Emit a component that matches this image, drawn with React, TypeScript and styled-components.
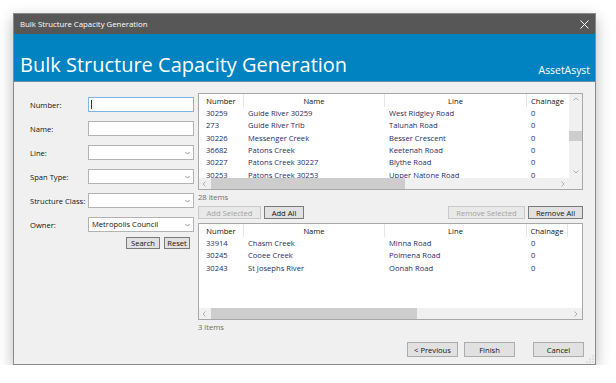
import styled, { createGlobalStyle } from "styled-components";

type Row = { number: string; name: string; line: string; chainage: string };

const available: Row[] = [
  { number: "30259", name: "Guide River 30259", line: "West Ridgley Road", chainage: "0" },
  { number: "273", name: "Guide River Trib", line: "Talunah Road", chainage: "0" },
  { number: "30226", name: "Messenger Creek", line: "Besser Crescent", chainage: "0" },
  { number: "36682", name: "Patons Creek", line: "Keetenah Road", chainage: "0" },
  { number: "30227", name: "Patons Creek 30227", line: "Blythe Road", chainage: "0" },
  { number: "30253", name: "Patons Creek 30253", line: "Upper Natone Road", chainage: "0" },
];

const selected: Row[] = [
  { number: "33914", name: "Chasm Creek", line: "Minna Road", chainage: "0" },
  { number: "30245", name: "Cooee Creek", line: "Poimena Road", chainage: "0" },
  { number: "30243", name: "St Josephs River", line: "Oonah Road", chainage: "0" },
];

const COLS = "45px 141px 142px 41px";

function Chevron({ dir }: { dir: "left" | "right" | "up" | "down" }) {
  const pts = {
    left: "3.5,0.5 1,3 3.5,5.5",
    right: "1.5,0.5 4,3 1.5,5.5",
    up: "0.5,3.5 3,1 5.5,3.5",
    down: "0.5,1.5 3,4 5.5,1.5",
  }[dir];
  return (
    <svg width="6" height="6" viewBox="0 0 6 6">
      <polyline points={pts} fill="none" stroke="#a6a6a6" strokeWidth="0.9" />
    </svg>
  );
}

function DataGrid({ rows, thumb, vscroll }: { rows: Row[]; thumb: number; vscroll?: boolean }) {
  return (
    <Grid>
      <GridMain>
        <Table>
          <HeaderRow $cols={vscroll ? COLS : COLS + " 1fr"}>
            <HeadCell>Number</HeadCell>
            <HeadCell>Name</HeadCell>
            <HeadCell>Line</HeadCell>
            <HeadCell>Chainage</HeadCell>
            {!vscroll && <HeadCell />}
          </HeaderRow>
          {rows.map((r) => (
            <DataRow key={r.number} $cols={COLS}>
              <Cell>{r.number}</Cell>
              <Cell>{r.name}</Cell>
              <Cell>{r.line}</Cell>
              <Cell>{r.chainage}</Cell>
            </DataRow>
          ))}
        </Table>
        {vscroll && (
          <VScroll>
            <ArrowBox $v>
              <Chevron dir="up" />
            </ArrowBox>
            <VThumb />
            <Spacer />
            <ArrowBox $v>
              <Chevron dir="down" />
            </ArrowBox>
          </VScroll>
        )}
      </GridMain>
      <HScrollRow>
        <HScroll>
          <ArrowBox>
            <Chevron dir="left" />
          </ArrowBox>
          <HThumb style={{ width: thumb }} />
          <Spacer />
          <ArrowBox>
            <Chevron dir="right" />
          </ArrowBox>
        </HScroll>
        {vscroll && <Corner />}
      </HScrollRow>
    </Grid>
  );
}

function Combo({ value }: { value?: string }) {
  return (
    <Field>
      <FieldText>{value}</FieldText>
      <svg width="5" height="4" viewBox="0 0 5 4">
        <polyline points="0.5,1 2.5,3 4.5,1" fill="none" stroke="#7a7a7a" strokeWidth="0.8" />
      </svg>
    </Field>
  );
}

export default function App() {
  return (
    <Page>
      <GlobalStyle />
      <Window>
        <TitleBar>
          <span>Bulk Structure Capacity Generation</span>
          <svg width="9" height="9" viewBox="0 0 9 9">
            <path d="M0.5 0.5 L8.5 8.5 M8.5 0.5 L0.5 8.5" stroke="#fff" strokeWidth="1" />
          </svg>
        </TitleBar>
        <Banner>
          <BannerTitle>Bulk Structure Capacity Generation</BannerTitle>
          <Brand>AssetAsyst</Brand>
        </Banner>
        <Body>
          <SearchPane>
            <Form>
              <Label>Number:</Label>
              <Field $focus>
                <Caret />
              </Field>
              <Label>Name:</Label>
              <Field />
              <Label>Line:</Label>
              <Combo />
              <Label>Span Type:</Label>
              <Combo />
              <Label>Structure Class:</Label>
              <Combo />
              <Label>Owner:</Label>
              <Combo value="Metropolis Council" />
            </Form>
            <SearchButtons>
              <Button $w={34} $h={12} $tone="strong">
                Search
              </Button>
              <Button $w={26} $h={12} $tone="strong">
                Reset
              </Button>
            </SearchButtons>
          </SearchPane>
          <ListPane>
            <DataGrid rows={available} thumb={194} vscroll />
            <Count>28 items</Count>
            <Actions>
              <Group>
                <Button $w={63} $h={13} $tone="disabled">
                  Add Selected
                </Button>
                <Button $w={40} $h={13} $tone="strong">
                  Add All
                </Button>
              </Group>
              <Group>
                <Button $w={77} $h={13} $tone="disabled">
                  Remove Selected
                </Button>
                <Button $w={55} $h={13} $tone="strong">
                  Remove All
                </Button>
              </Group>
            </Actions>
            <DataGrid rows={selected} thumb={206} />
            <Count>3 items</Count>
            <Footer>
              <Button $w={51} $h={15}>&lt; Previous</Button>
              <Button $w={51} $h={15}>Finish</Button>
              <CancelSlot>
                <Button $w={51} $h={15}>Cancel</Button>
              </CancelSlot>
            </Footer>
          </ListPane>
        </Body>
        <Grip width="8" height="8" viewBox="0 0 8 8">
          {[
            [7, 1],
            [7, 4],
            [4, 4],
            [7, 7],
            [4, 7],
            [1, 7],
          ].map(([x, y]) => (
            <rect key={`${x}-${y}`} x={x - 0.5} y={y - 0.5} width="1" height="1" fill="#b0b0b0" />
          ))}
        </Grip>
      </Window>
    </Page>
  );
}

const GlobalStyle = createGlobalStyle`
  body {
    margin: 0;
    background: #ffffff;
    font-family: "Open Sans", "Noto Sans", sans-serif;
  }
`;

const Page = styled.div`
  padding: 13px 0 0 13px;
`;

const Window = styled.div`
  position: relative;
  width: 583px;
  height: 352px;
  box-sizing: border-box;
  border: 1px solid #8a8a8a;
  background: #f0f0f0;
  display: flex;
  flex-direction: column;
  box-shadow: 0 5px 14px rgba(0, 0, 0, 0.28);
`;

const TitleBar = styled.div`
  height: 20px;
  flex: none;
  background: #575757;
  color: #ffffff;
  font-size: 7.8px;
  display: flex;
  align-items: center;
  justify-content: space-between;
  padding: 0 6px 0 6px;
`;

const Banner = styled.div`
  height: 48px;
  flex: none;
  background: #0283c1;
  border-bottom: 1px solid #6d8ca2;
  color: #ffffff;
  display: flex;
  align-items: flex-end;
  justify-content: space-between;
  padding: 0 5px 4px 6px;
  box-sizing: border-box;
`;

const BannerTitle = styled.div`
  font-size: 20px;
  line-height: 24px;
`;

const Brand = styled.div`
  font-size: 10.4px;
  line-height: 14px;
`;

const Body = styled.div`
  flex: 1;
  display: flex;
  min-height: 0;
`;

const SearchPane = styled.div`
  width: 184px;
  flex: none;
  box-sizing: border-box;
  padding: 15px 0 0 16px;
`;

const Form = styled.div`
  display: grid;
  grid-template-columns: 58px 106px;
  grid-auto-rows: 15px;
  row-gap: 9px;
  align-items: center;
`;

const Label = styled.div`
  font-size: 7.6px;
  color: #111;
  white-space: nowrap;
`;

const Field = styled.div<{ $focus?: boolean }>`
  position: relative;
  height: 15px;
  box-sizing: border-box;
  background: #ffffff;
  border: 1px solid ${(p) => (p.$focus ? "#7eb4ea" : "#b3b3b3")};
  display: flex;
  align-items: center;
  justify-content: space-between;
  padding: 0 3px 0 3px;
`;

const FieldText = styled.span`
  font-size: 7.6px;
  color: #111;
  margin-top: -2px;
`;

const Caret = styled.span`
  position: absolute;
  left: 2px;
  top: 2px;
  width: 1px;
  height: 9px;
  background: #333;
`;

const SearchButtons = styled.div`
  display: flex;
  justify-content: flex-end;
  gap: 4px;
  margin-top: 5px;
  padding-right: 4px;
  width: 164px;
  box-sizing: border-box;
`;

const Button = styled.div<{ $w: number; $h: number; $tone?: "strong" | "disabled" }>`
  width: ${(p) => p.$w}px;
  height: ${(p) => p.$h}px;
  box-sizing: border-box;
  display: flex;
  align-items: center;
  justify-content: center;
  font-size: 7.6px;
  white-space: nowrap;
  background: ${(p) => (p.$tone === "disabled" ? "#e9e9e9" : "#e1e1e1")};
  color: ${(p) => (p.$tone === "disabled" ? "#a2a2a2" : "#111")};
  border: 1px solid
    ${(p) => (p.$tone === "strong" ? "#7a7a7a" : p.$tone === "disabled" ? "#c9c9c9" : "#adadad")};
`;

const ListPane = styled.div`
  flex: 1;
  display: flex;
  flex-direction: column;
  padding: 11px 12px 0 0;
  min-width: 0;
`;

const Grid = styled.div`
  height: 97px;
  flex: none;
  box-sizing: border-box;
  border: 1px solid #a7a7a7;
  background: #ffffff;
  display: flex;
  flex-direction: column;
`;

const GridMain = styled.div`
  flex: 1;
  display: flex;
  min-height: 0;
`;

const Table = styled.div`
  flex: 1;
  overflow: hidden;
`;

const HeaderRow = styled.div<{ $cols: string }>`
  display: grid;
  grid-template-columns: ${(p) => p.$cols};
  height: 13px;
`;

const HeadCell = styled.div`
  font-size: 7.6px;
  color: #111;
  display: flex;
  align-items: center;
  justify-content: center;
  border-right: 1px solid #e5e5e5;
  white-space: nowrap;
  &:last-child {
    border-right: none;
  }
`;

const DataRow = styled.div<{ $cols: string }>`
  display: grid;
  grid-template-columns: ${(p) => p.$cols};
  height: 12.3px;
  align-items: center;
`;

const Cell = styled.div`
  font-size: 7.6px;
  color: #1f2c68;
  padding-left: 4px;
  white-space: nowrap;
  overflow: hidden;
  &:first-child {
    padding-left: 7px;
  }
`;

const VScroll = styled.div`
  width: 13px;
  flex: none;
  background: #f0f0f0;
  display: flex;
  flex-direction: column;
`;

const VThumb = styled.div`
  height: 10px;
  margin-top: 25px;
  background: #cdcdcd;
`;

const Spacer = styled.div`
  flex: 1;
`;

const ArrowBox = styled.div<{ $v?: boolean }>`
  flex: none;
  width: ${(p) => (p.$v ? "13px" : "12px")};
  height: ${(p) => (p.$v ? "12px" : "11px")};
  display: flex;
  align-items: center;
  justify-content: center;
`;

const HScrollRow = styled.div`
  height: 11px;
  flex: none;
  display: flex;
`;

const HScroll = styled.div`
  flex: 1;
  display: flex;
  background: #f0f0f0;
`;

const HThumb = styled.div`
  background: #cdcdcd;
  height: 100%;
`;

const Corner = styled.div`
  width: 13px;
  background: #f0f0f0;
`;

const Count = styled.div`
  font-size: 7.6px;
  color: #6d6d6d;
  height: 12px;
  line-height: 12px;
  margin-top: 1px;
`;

const Actions = styled.div`
  display: flex;
  justify-content: space-between;
  margin-top: 3px;
  margin-bottom: 4px;
`;

const Group = styled.div`
  display: flex;
  gap: 3px;
`;

const Footer = styled.div`
  display: flex;
  justify-content: flex-end;
  gap: 6px;
  margin-top: 9px;
  margin-right: -1px;
`;

const CancelSlot = styled.div`
  margin-left: 12px;
`;

const Grip = styled.svg`
  position: absolute;
  right: 1px;
  bottom: 1px;
`;
